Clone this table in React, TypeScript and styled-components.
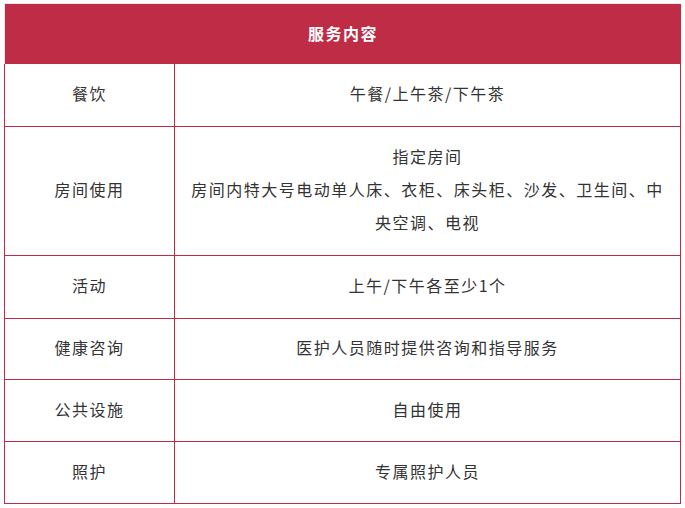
import React from "react";
import styled, { createGlobalStyle } from "styled-components";

const GlobalStyle = createGlobalStyle`
  html, body {
    margin: 0;
    padding: 0;
    background: #ffffff;
  }
  body {
    font-family: "Noto Sans CJK SC", "Noto Sans", sans-serif;
  }
`;

const RED = "#be2c45";

const Page = styled.div`
  padding: 3px 0 0 4px;
`;

const Table = styled.div`
  width: 677px;
  display: flex;
  flex-direction: column;
`;

const Header = styled.div`
  height: 61px;
  background: ${RED};
  border-top: 1px solid #e6e6e6;
  border-left: 1px solid #e6e6e6;
  box-sizing: border-box;
  display: flex;
  align-items: center;
  justify-content: center;
  padding-bottom: 3px;
  color: #ffffff;
  font-size: 16px;
  font-weight: 700;
  letter-spacing: 1.5px;
`;

const Row = styled.div<{ $h: number }>`
  display: grid;
  grid-template-columns: 169px 1fr;
  height: ${(p) => p.$h}px;
  box-sizing: border-box;
  border-bottom: 1px solid ${RED};
  border-left: 1px solid ${RED};
  border-right: 1px solid ${RED};
`;

const Cell = styled.div<{ $divider?: boolean }>`
  display: flex;
  flex-direction: column;
  align-items: center;
  justify-content: center;
  text-align: center;
  padding: 0 12px 3px;
  color: #333333;
  font-size: 16px;
  line-height: 33px;
  letter-spacing: 1.5px;
  border-left: ${(p) => (p.$divider ? `1px solid ${RED}` : "none")};
`;

const Line = styled.div`
  width: 100%;
`;

const rows: { label: string; lines: string[]; h: number }[] = [
  { label: "餐饮", lines: ["午餐/上午茶/下午茶"], h: 63 },
  {
    label: "房间使用",
    lines: ["指定房间", "房间内特大号电动单人床、衣柜、床头柜、沙发、卫生间、中央空调、电视"],
    h: 129,
  },
  { label: "活动", lines: ["上午/下午各至少1个"], h: 63 },
  { label: "健康咨询", lines: ["医护人员随时提供咨询和指导服务"], h: 61 },
  { label: "公共设施", lines: ["自由使用"], h: 62 },
  { label: "照护", lines: ["专属照护人员"], h: 62 },
];

export default function App() {
  return (
    <>
      <GlobalStyle />
      <Page>
        <Table>
          <Header>服务内容</Header>
          {rows.map((r) => (
            <Row key={r.label} $h={r.h}>
              <Cell>{r.label}</Cell>
              <Cell $divider>
                {r.lines.map((l) => (
                  <Line key={l}>{l}</Line>
                ))}
              </Cell>
            </Row>
          ))}
        </Table>
      </Page>
    </>
  );
}
